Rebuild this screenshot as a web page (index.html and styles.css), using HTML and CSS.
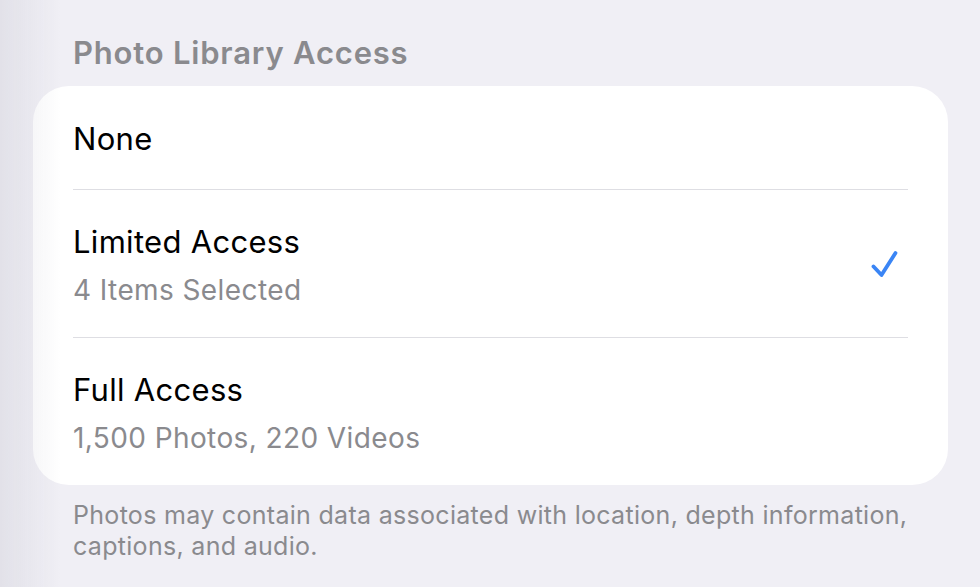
FILE: index.html
```html
<!DOCTYPE html>
<html>
<head>
<meta charset="utf-8">
<link rel="stylesheet" href="styles.css">
</head>
<body>
<div class="shade"></div>
<main class="page">
  <h2 class="section-title">Photo Library Access</h2>
  <div class="card">
    <div class="row row-single">
      <div class="row-text"><div class="row-title">None</div></div>
    </div>
    <div class="sep"></div>
    <div class="row">
      <div class="row-text">
        <div class="row-title">Limited Access</div>
        <div class="row-sub">4 Items Selected</div>
      </div>
      <svg class="check" width="36" height="36" viewBox="0 0 36 36"><path d="M5.5 19.5 L13.5 28 L27.5 6" fill="none" stroke="#3a85f5" stroke-width="3.8" stroke-linecap="round" stroke-linejoin="round"/></svg>
    </div>
    <div class="sep"></div>
    <div class="row">
      <div class="row-text">
        <div class="row-title">Full Access</div>
        <div class="row-sub">1,500 Photos, 220 Videos</div>
      </div>
    </div>
  </div>
  <p class="footer">Photos may contain data associated with location, depth information, captions, and audio.</p>
</main>
</body>
</html>
```
FILE: styles.css
```css
html, body {
  margin: 0;
  padding: 0;
}
body {
  background: #f0eff5;
  font-family: Inter, "Liberation Sans", sans-serif;
  width: 980px;
  height: 587px;
  overflow: hidden;
}
.shade {
  position: fixed;
  left: 0;
  top: 0;
  width: 60px;
  height: 100%;
  background: linear-gradient(to right, rgba(200,200,210,0.35), rgba(200,200,210,0));
  pointer-events: none;
  z-index: 5;
}
.page {
  padding: 0 32px 0 33px;
}
.section-title {
  margin: 0;
  padding: 35px 0 0 40px;
  height: 86px;
  box-sizing: border-box;
  font-size: 31px;
  line-height: 36px;
  font-weight: 600;
  color: #8a8a8e;
  letter-spacing: 0.8px;
}
.card {
  background: #ffffff;
  border-radius: 36px;
  display: flex;
  flex-direction: column;
}
.row {
  height: 147px;
  box-sizing: border-box;
  padding: 4px 40px 0 40px;
  display: flex;
  align-items: center;
  justify-content: space-between;
}
.row-single {
  height: 103px;
  padding-top: 2px;
}
.row-title {
  font-size: 31px;
  line-height: 36px;
  color: #000;
  letter-spacing: 0.3px;
}
.row-sub {
  font-size: 28px;
  line-height: 34px;
  margin-top: 13px;
  color: #8a8a8e;
  letter-spacing: 0.4px;
}
.sep {
  height: 1px;
  background: #dedee3;
  margin: 0 40px;
}
.check {
  margin-right: 4px;
  margin-top: -2px;
}
.footer {
  margin: 15px 0 0 0;
  padding: 0 40px;
  font-size: 25px;
  line-height: 31px;
  color: #8a8a8e;
  letter-spacing: 0.3px;
}
```
